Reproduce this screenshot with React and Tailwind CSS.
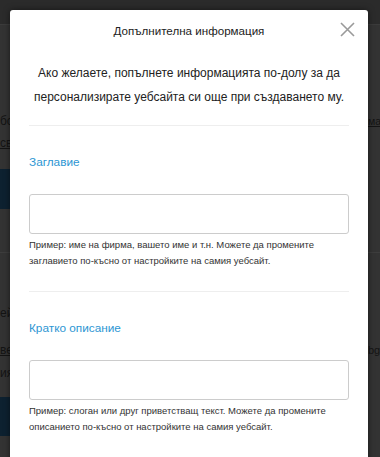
import React from 'react';

function CloseIcon() {
  return (
    <svg width="15" height="15" viewBox="0 0 15 15" fill="none">
      <path d="M1 1L14 14M14 1L1 14" stroke="#9a9a9a" strokeWidth="1.6" />
    </svg>
  );
}

function Field({ label, help }) {
  return (
    <div>
      <div className="h-px bg-[#eeeeee]" />
      <label className="block mt-[26px] text-[11.8px] leading-[20px] text-[#2d96d3]">{label}</label>
      <input
        type="text"
        className="block mt-[22px] w-full h-[40px] border border-[#cccccc] rounded-[3px] px-3 outline-none"
      />
      <p className="mt-[3px] text-[9.5px] leading-[16px] text-[#333333]">{help}</p>
    </div>
  );
}

export default function App() {
  return (
    <div
      className="relative w-[380px] h-[457px] overflow-hidden bg-[#333333]"
      style={{ fontFamily: '"Liberation Sans", Arial, sans-serif' }}
    >
      {/* page behind the overlay */}
      <div className="flex flex-col text-[12px] leading-[14px] text-[#141414]">
        <div className="h-[25px] bg-[#2b2b2b] border-b border-[#3b3b3b]" />
        <div className="mt-[89px] flex justify-between">
          <span className="whitespace-nowrap">бсайт</span>
          <span className="w-[12px] text-[10.5px] whitespace-nowrap underline">ма</span>
        </div>
        <div className="mt-[8px]">
          <span className="underline whitespace-nowrap">свържете</span>
        </div>
        <div className="mt-[19px] h-[40px] w-[120px] bg-[#0d2130]" />
        <div className="mt-[43px] border-t border-[#3d3d3d]" />
        <div className="mt-[53px] whitespace-nowrap">ейт</div>
        <div className="mt-[23px] flex justify-between">
          <span className="underline whitespace-nowrap">вече</span>
          <span className="w-[12px] text-[11px] whitespace-nowrap">bg</span>
        </div>
        <div className="mt-[9px] whitespace-nowrap">ия</div>
        <div className="mt-[17px] h-[39px] w-[120px] bg-[#0d2130]" />
      </div>

      {/* modal */}
      <div className="absolute top-[10px] left-[10px] w-[358px] h-[470px] bg-white rounded-t-[3px] shadow-[0_0_6px_rgba(0,0,0,0.5)]">
        <div className="relative h-[42px] flex items-center justify-center">
          <h1 className="text-[11.6px] text-[#222222]">Допълнителна информация</h1>
          <button className="absolute right-[13px] top-[12px] w-[15px] h-[15px]">
            <CloseIcon />
          </button>
        </div>
        <div className="px-[19px]">
          <p className="mt-[9px] text-center text-[12px] leading-[24px] text-[#222222]">
            Ако желаете, попълнете информацията по-долу за да
            <br />
            персонализирате уебсайта си още при създаването му.
          </p>
          <div className="mt-[16px]">
            <Field
              label="Заглавие"
              help={
                <>
                  Пример: име на фирма, вашето име и т.н. Можете да промените
                  <br />
                  заглавието по-късно от настройките на самия уебсайт.
                </>
              }
            />
          </div>
          <div className="mt-[22px]">
            <Field
              label="Кратко описание"
              help={
                <>
                  Пример: слоган или друг приветстващ текст. Можете да промените
                  <br />
                  описанието по-късно от настройките на самия уебсайт.
                </>
              }
            />
          </div>
        </div>
      </div>
    </div>
  );
}
